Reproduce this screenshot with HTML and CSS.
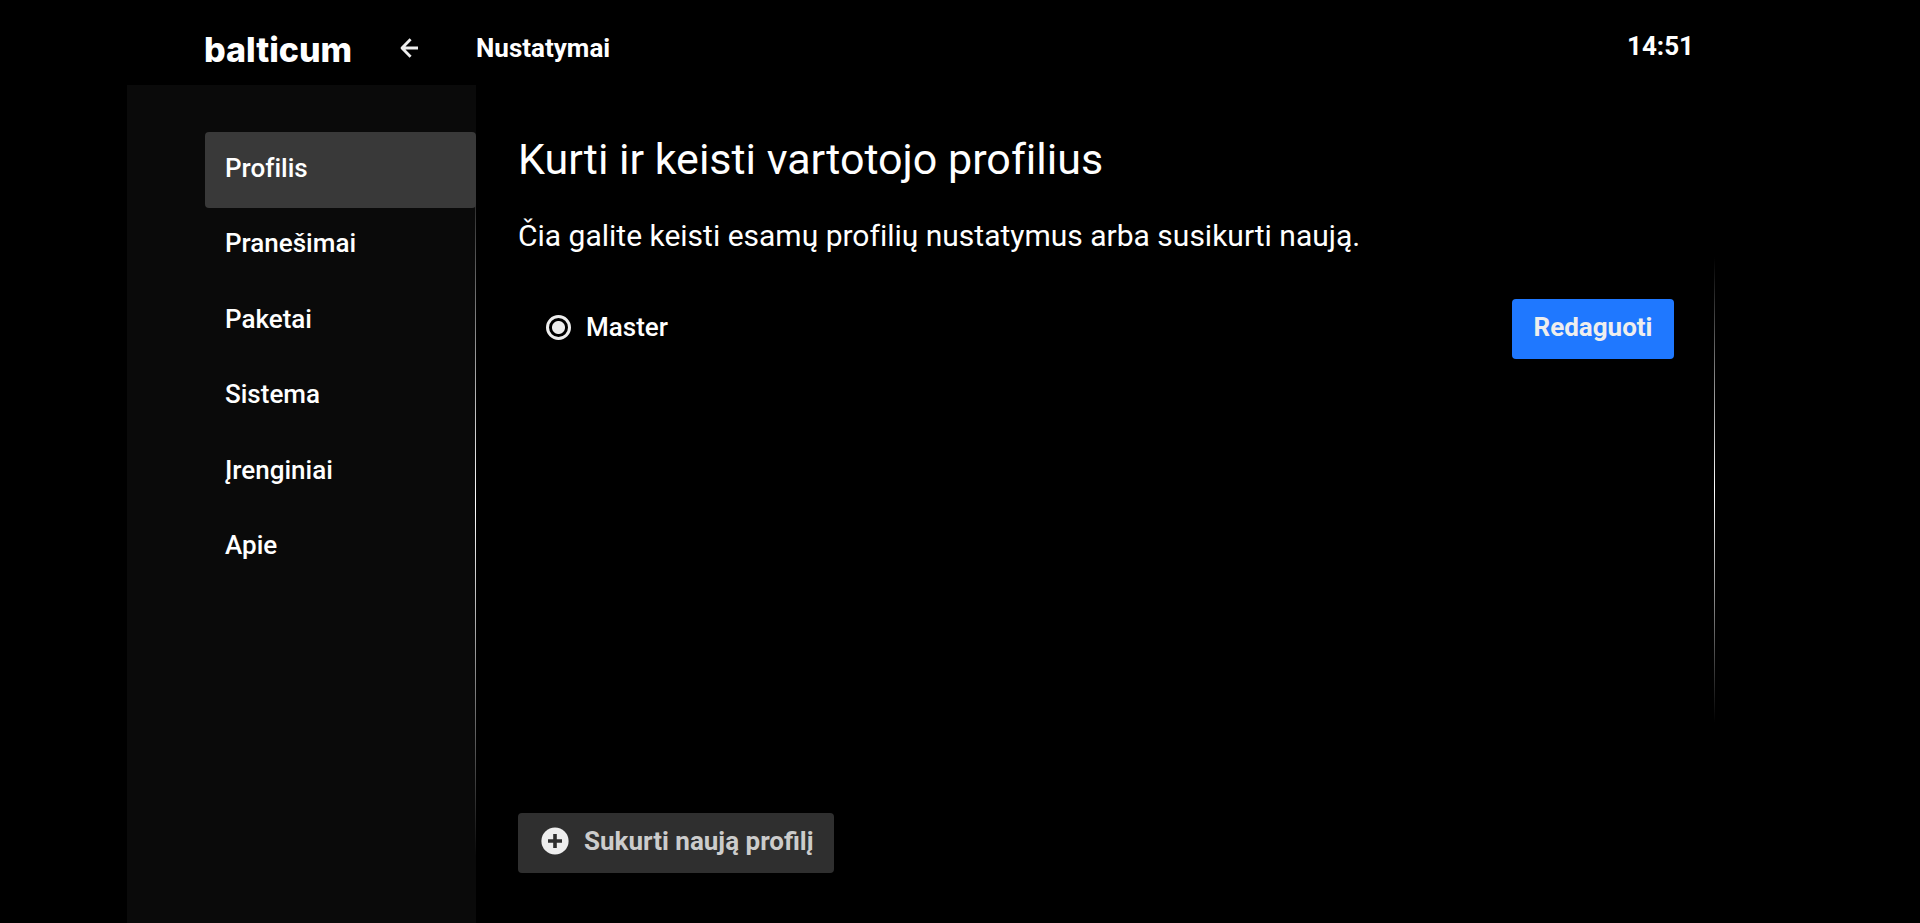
FILE: index.html
```html
<!DOCTYPE html>
<html lang="lt">
<head>
    <meta charset="UTF-8">
    <meta name="viewport" content="width=device-width, initial-scale=1.0">
    <title>Nustatymai</title>
    <link rel="stylesheet" href="styles.css">
</head>
<body>

    <div class="page">
        <header class="header">
            <a href="#" class="logo">balticum</a>
            <button type="button" class="back" aria-label="Atgal">
                <svg width="18" height="20" viewBox="0 0 18 20" fill="none" stroke="#eee" stroke-width="2.8" stroke-linejoin="round">
                    <path d="M10.6 1.2 L2 10 L10.6 18.8 M2 10 H18"/>
                </svg>
            </button>
            <h1 class="header-title">Nustatymai</h1>
            <time class="clock">14:51</time>
        </header>

        <!-- Meniu -->
        <nav class="sidebar">
            <div class="menu">
                <a href="#" class="menu-item active">Profilis</a>
                <a href="#" class="menu-item">Pranešimai</a>
                <a href="#" class="menu-item">Paketai</a>
                <a href="#" class="menu-item">Sistema</a>
                <a href="#" class="menu-item">Įrenginiai</a>
                <a href="#" class="menu-item">Apie</a>
            </div>
        </nav>

        <main class="content">
            <h2>Kurti ir keisti vartotojo profilius</h2>
            <p class="description">Čia galite keisti esamų profilių nustatymus arba susikurti naują.</p>

            <!-- Profilių sąrašas -->
            <div class="profiles">
                <div class="profile">
                    <input type="radio" name="profile" id="master" checked>
                    <label for="master">Master</label>
                    <button type="button" class="btn btn-edit">Redaguoti</button>
                </div>
            </div>

            <button type="button" class="btn btn-create">
                <svg width="28" height="28" viewBox="0 0 28 28">
                    <circle cx="14" cy="14" r="13.6" fill="#eee"/>
                    <path d="M14 7 V21 M7 14 H21" stroke="#2f2f2f" stroke-width="3.6"/>
                </svg>
                Sukurti naują profilį
            </button>
        </main>
    </div>

</body>
</html>
```
FILE: styles.css
```css
* {
    box-sizing: border-box;
}

body {
    margin: 0;
    background-color: #000;
    color: #fff;
    font-family: Roboto, "Open Sans", sans-serif;
    font-size: 26px;
    font-variant-ligatures: none;
}

a {
    color: inherit;
    text-decoration: none;
}

button {
    font-family: inherit;
    font-size: inherit;
    border: none;
    cursor: pointer;
}

.page {
    display: grid;
    grid-template-columns: 349px 1fr;
    grid-template-rows: 85px 1fr;
    min-height: 100vh;
    padding: 0 127px;
}

/* Viršutinė juosta */
.header {
    grid-column: 1 / 3;
    display: flex;
    align-items: center;
    padding: 10px 99px 0 77px;
}

.logo {
    width: 196px;
    padding-top: 4px;
    font-family: Inter, sans-serif;
    font-size: 34px;
    font-weight: 800;
    line-height: 40px;
}

.back {
    display: flex;
    width: 76px;
    padding: 0;
    background: none;
}

.header-title {
    margin: 0;
    font-size: 26px;
    line-height: 32px;
    font-weight: 700;
}

.clock {
    margin-left: auto;
    padding-bottom: 4px;
    font-weight: 700;
}

/* Meniu su blunkančia linija dešinėje */
.sidebar {
    padding: 47px 0 0 78px;
    background: linear-gradient(transparent 8%, #fff 50%, transparent 92%) right / 1px 100% no-repeat #0a0a0a;
}

.menu {
    display: grid;
    grid-auto-rows: 1fr;
    height: 453px;
}

.menu-item {
    display: flex;
    align-items: center;
    padding: 0 20px 4px;
    border-radius: 4px;
    font-weight: 500;
}

.menu-item.active {
    background-color: #393939;
}

/* Turinys */
.content {
    display: flex;
    flex-direction: column;
    align-items: flex-start;
    margin-right: 78px;
    padding: 48px 0 50px 42px;
}

h2 {
    margin: 0 0 32px;
    font-size: 43px;
    line-height: 52px;
    font-weight: 400;
}

.description {
    margin: 0;
    font-size: 30px;
    line-height: 38px;
}

.profiles {
    flex: 1;
    align-self: stretch;
    margin: 2px 0 90px;
    padding: 42px 41px 0 28px;
    background: linear-gradient(transparent, #fff, transparent) right / 1px 100% no-repeat;
}

.profile {
    display: flex;
    align-items: center;
    font-weight: 500;
}

.profile input {
    appearance: none;
    width: 25px;
    height: 25px;
    margin: 0 15px 4px 0;
    border: 3px solid #eee;
    border-radius: 50%;
    background: radial-gradient(circle, #eee 6px, transparent 7px);
}

.profile label {
    flex: 1;
    padding-bottom: 4px;
}

.btn {
    display: flex;
    align-items: center;
    justify-content: center;
    min-width: 162px;
    height: 60px;
    padding: 0 20px 4px;
    border-radius: 4px;
    font-weight: 700;
}

.btn-edit {
    background-color: #1f78ff;
    color: #eee;
}

.btn-create {
    gap: 15px;
    padding-left: 23px;
    background-color: #2f2f2f;
    color: #ccc;
}
```
